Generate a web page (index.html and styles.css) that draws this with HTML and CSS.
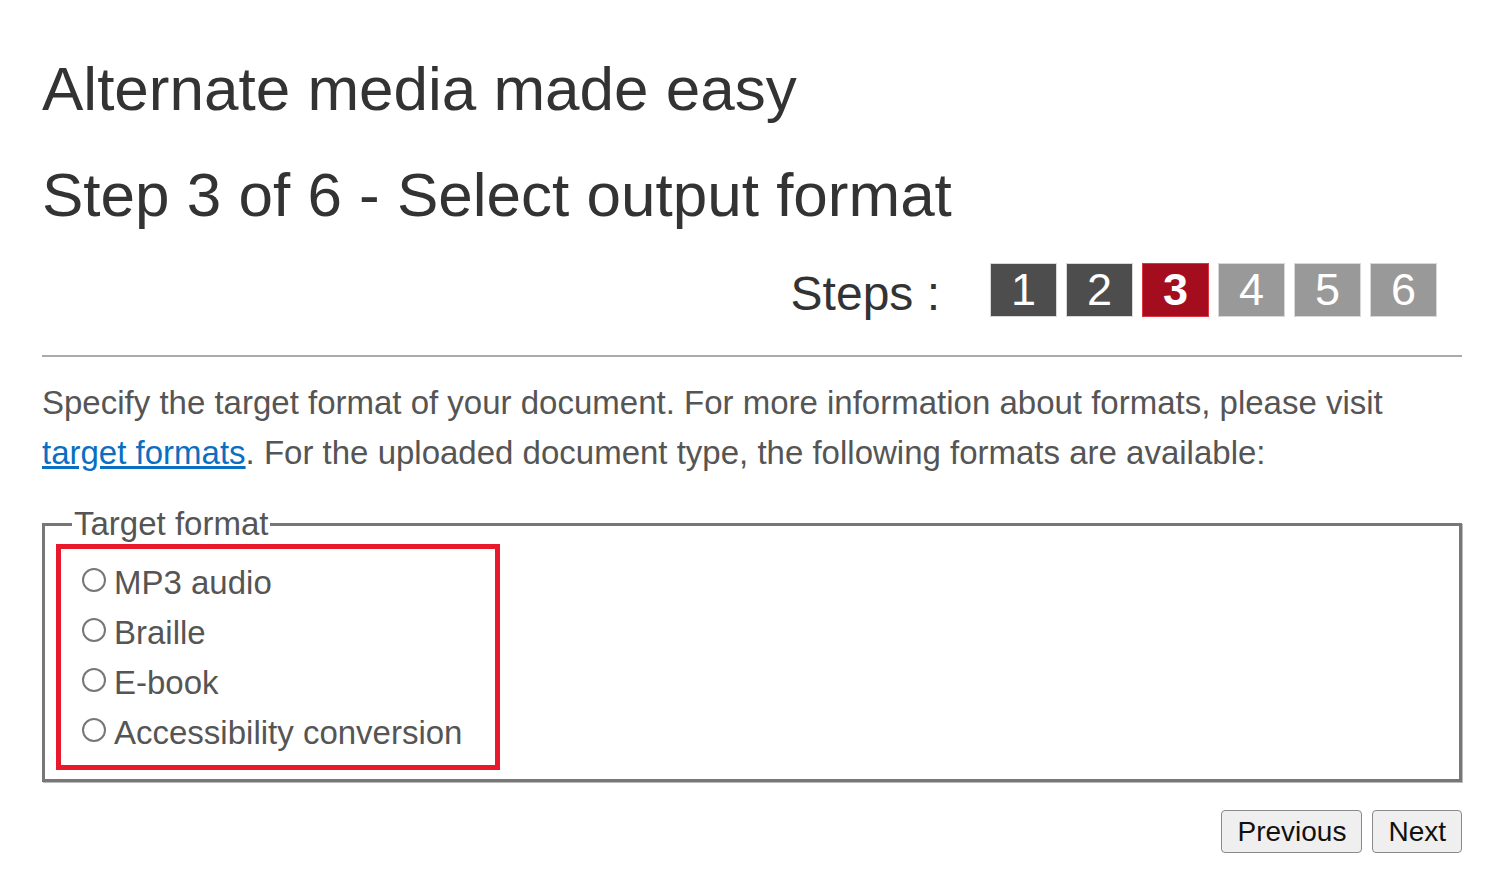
FILE: index.html
```html
<!DOCTYPE html>
<html lang="en">
<head>
<meta charset="utf-8">
<title>Alternate media made easy</title>
<link rel="stylesheet" href="styles.css">
</head>
<body>
<main class="page">
  <h1 class="title">Alternate media made easy</h1>
  <h2 class="subtitle">Step 3 of 6 - Select output format</h2>
  <div class="steps">
    <span class="steps-label">Steps :</span>
    <ol class="step-list">
      <li class="step done">1</li>
      <li class="step done">2</li>
      <li class="step current">3</li>
      <li class="step todo">4</li>
      <li class="step todo">5</li>
      <li class="step todo">6</li>
    </ol>
  </div>
  <hr class="rule">
  <p class="intro">Specify the target format of your document. For more information about formats, please visit <a href="#" class="link">target formats</a>. For the uploaded document type, the following formats are available:</p>
  <fieldset class="formats">
    <legend class="formats-legend">Target format</legend>
    <div class="highlight">
      <label class="option"><input type="radio" name="fmt" class="radio"><span>MP3 audio</span></label>
      <label class="option"><input type="radio" name="fmt" class="radio"><span>Braille</span></label>
      <label class="option"><input type="radio" name="fmt" class="radio"><span>E-book</span></label>
      <label class="option"><input type="radio" name="fmt" class="radio"><span>Accessibility conversion</span></label>
    </div>
  </fieldset>
  <div class="actions">
    <button type="button" class="btn">Previous</button>
    <button type="button" class="btn">Next</button>
  </div>
</main>
</body>
</html>
```

FILE: styles.css
```css
html, body {
  margin: 0;
  padding: 0;
  background: #fff;
}
body {
  font-family: "Liberation Sans", Arial, sans-serif;
  color: #333;
}
.page {
  padding: 53px 38px 0 42px;
}
.title {
  margin: 0;
  font-size: 62px;
  font-weight: normal;
  line-height: 72px;
  color: #333;
}
.subtitle {
  margin: 34px 0 0;
  font-size: 62px;
  font-weight: normal;
  line-height: 72px;
  color: #333;
}
.steps {
  display: flex;
  justify-content: flex-end;
  align-items: center;
  margin-top: 32px;
  padding-right: 25px;
}
.steps-label {
  font-size: 48px;
  line-height: 54px;
  margin-right: 50px;
  color: #333;
  position: relative;
  top: 4px;
}
.step-list {
  display: flex;
  gap: 9px;
  list-style: none;
  margin: 0;
  padding: 0;
}
.step {
  width: 67px;
  height: 54px;
  box-sizing: border-box;
  border: 1px solid #d8d8d8;
  color: #fff;
  font-size: 45px;
  line-height: 52px;
  text-align: center;
}
.step.done { background: #4d4d4d; }
.step.current { background: #a30d1d; border-color: #e03342; font-weight: bold; }
.step.todo { background: #999; }
.rule {
  margin: 38px 0 0;
  border: 0;
  border-top: 2px solid #aaa;
  height: 0;
}
.intro {
  margin: 21px 0 0;
  font-size: 33px;
  line-height: 50px;
  color: #555;
}
.link {
  color: #0a6fc2;
  text-decoration: underline;
}
.formats {
  margin: 28px 0 0;
  padding: 0 12px 9px 10px;
  border: 3px solid #777;
  box-shadow: 1px 1px 0 #bbb;
  min-width: 0;
}
.formats-legend {
  font-size: 33px;
  line-height: 36px;
  color: #555;
  padding: 0 2px;
  margin-left: 17px;
}
.highlight {
  width: 444px;
  box-sizing: border-box;
  border: 5px solid #e8192c;
  padding: 9px 0 7px 21px;
  margin: 2px 0 0 1px;
}
.option {
  display: flex;
  align-items: center;
  height: 50px;
  font-size: 33px;
  color: #555;
}
.radio {
  appearance: none;
  width: 24px;
  height: 24px;
  margin: 0 8px 0 0;
  border: 2px solid #777;
  border-radius: 50%;
  background: #fff;
  position: relative;
  top: -3px;
}
.actions {
  display: flex;
  justify-content: flex-end;
  gap: 10px;
  margin-top: 28px;
}
.btn {
  font-family: "Liberation Sans", Arial, sans-serif;
  font-size: 28px;
  color: #111;
  background: #efefef;
  border: 1.5px solid #8a8a8a;
  border-radius: 4px;
  height: 43px;
  padding: 0 15px;
}
```
